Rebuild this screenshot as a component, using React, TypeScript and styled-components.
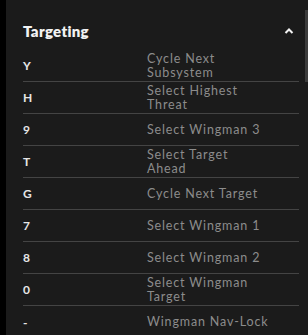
import styled, { createGlobalStyle } from 'styled-components';

const Global = createGlobalStyle`
  html, body {
    margin: 0;
    padding: 0;
    background: #000;
  }
  body {
    font-family: Lato, "Liberation Sans", sans-serif;
  }
`;

const Page = styled.div`
  display: flex;
  width: 308px;
  height: 335px;
  padding-left: 6px;
  box-sizing: border-box;
  background: #000;
`;

const Panel = styled.div`
  flex: 1;
  display: flex;
  background: #1b1b1b;
  overflow: hidden;
`;

const Main = styled.div`
  flex: 1;
  padding: 0 6px 0 17px;
`;

const Header = styled.div`
  height: 50px;
  padding-top: 20px;
  box-sizing: border-box;
  display: flex;
  align-items: flex-start;
  justify-content: space-between;
`;

const Title = styled.h2`
  margin: 0;
  font-size: 15px;
  line-height: 22px;
  font-weight: 800;
  color: #f2f2f2;
  letter-spacing: 0.3px;
`;

const Chevron = styled.svg`
  width: 10px;
  height: 22px;
  margin-right: 5px;
`;

const Row = styled.div`
  height: 32px;
  box-sizing: border-box;
  display: flex;
  align-items: center;
  border-bottom: 1px solid #444;

  &:last-child {
    border-bottom: none;
  }
`;

const Key = styled.div`
  width: 124px;
  flex-shrink: 0;
  font-size: 12px;
  font-weight: 700;
  color: #e6e6e6;
`;

const Action = styled.div`
  width: 124px;
  font-size: 12.5px;
  line-height: 14px;
  letter-spacing: 0.85px;
  color: #8c8c8c;
`;

const Track = styled.div`
  width: 3px;
  padding-top: 10px;
`;

const Thumb = styled.div`
  height: 72px;
  background: #3c3c3c;
`;

const binds = [
  { key: 'Y', action: 'Cycle Next Subsystem' },
  { key: 'H', action: 'Select Highest Threat' },
  { key: '9', action: 'Select Wingman 3' },
  { key: 'T', action: 'Select Target Ahead' },
  { key: 'G', action: 'Cycle Next Target' },
  { key: '7', action: 'Select Wingman 1' },
  { key: '8', action: 'Select Wingman 2' },
  { key: '0', action: 'Select Wingman Target' },
  { key: '-', action: 'Wingman Nav-Lock' },
];

const App = () => {
  return (
    <Page>
      <Global/>
      <Panel>
        <Main>
          <Header>
            <Title>Targeting</Title>
            <Chevron viewBox="0 0 10 22">
              <path d="M1.5 13 L5 9.5 L8.5 13" fill="none" stroke="#f2f2f2" strokeWidth="2"/>
            </Chevron>
          </Header>
          {binds.map(b => (
            <Row key={b.key}>
              <Key>{b.key}</Key>
              <Action>{b.action}</Action>
            </Row>
          ))}
        </Main>
        <Track>
          <Thumb/>
        </Track>
      </Panel>
    </Page>
  );
};

export default App;
